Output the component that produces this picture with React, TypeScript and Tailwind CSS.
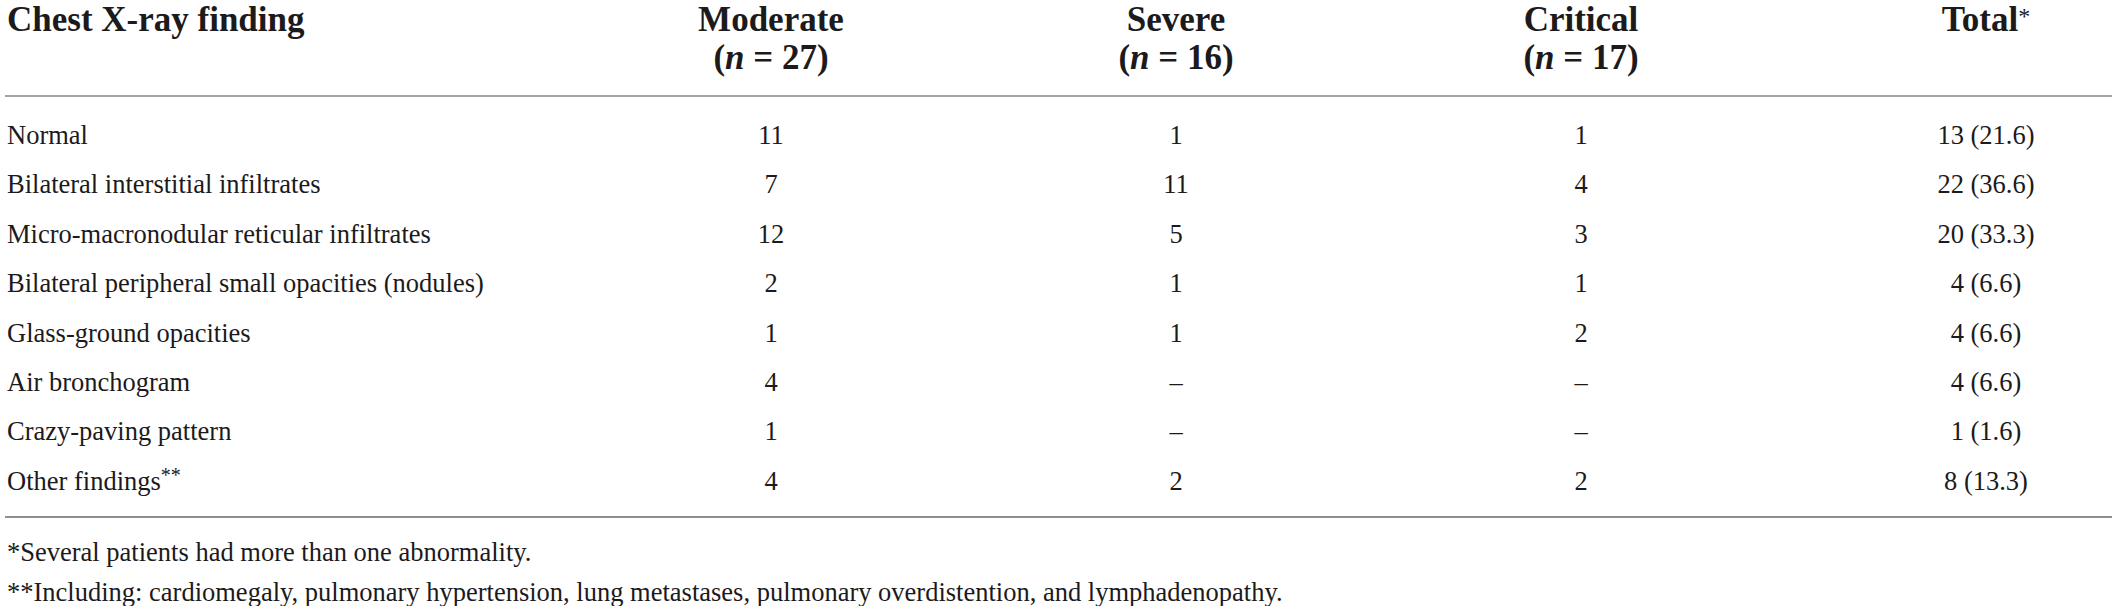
import React from 'react';

type Row = {
  label: string;
  sup?: string;
  moderate: string;
  severe: string;
  critical: string;
  total: string;
};

const ROWS: Row[] = [
  { label: 'Normal', moderate: '11', severe: '1', critical: '1', total: '13 (21.6)' },
  { label: 'Bilateral interstitial infiltrates', moderate: '7', severe: '11', critical: '4', total: '22 (36.6)' },
  { label: 'Micro-macronodular reticular infiltrates', moderate: '12', severe: '5', critical: '3', total: '20 (33.3)' },
  { label: 'Bilateral peripheral small opacities (nodules)', moderate: '2', severe: '1', critical: '1', total: '4 (6.6)' },
  { label: 'Glass-ground opacities', moderate: '1', severe: '1', critical: '2', total: '4 (6.6)' },
  { label: 'Air bronchogram', moderate: '4', severe: '–', critical: '–', total: '4 (6.6)' },
  { label: 'Crazy-paving pattern', moderate: '1', severe: '–', critical: '–', total: '1 (1.6)' },
  { label: 'Other findings', sup: '**', moderate: '4', severe: '2', critical: '2', total: '8 (13.3)' },
];

// first column + four centred count columns
const GRID = 'grid grid-cols-[461px_200px_200px_200px_200px] gap-x-[205px]';

const GroupHead = ({ name, n }: { name: string; n: number }) => (
  <div className="text-center whitespace-nowrap">
    <div>{name}</div>
    <div>
      (<span className="italic">n</span> = {n})
    </div>
  </div>
);

export default function App() {
  return (
    <div className="w-[2117px] h-[606px] overflow-hidden bg-white px-[5px] text-[#1c1a1b] font-['Liberation_Serif','Times_New_Roman',serif]">
      {/* header */}
      <div className={`${GRID} pt-[1px] pb-[18px] text-[35px] leading-[38px] font-bold`}>
        <div className="pl-[2px] whitespace-nowrap">Chest X-ray finding</div>
        <GroupHead name="Moderate" n={27} />
        <GroupHead name="Severe" n={16} />
        <GroupHead name="Critical" n={17} />
        <div className="text-center">
          Total<span className="align-top text-[24px] leading-[30px] font-normal">*</span>
        </div>
      </div>
      <div className="h-[2px] bg-[#a3a3a3]" />

      {/* body */}
      <div className="pt-[14px] pb-[10px] text-[26.5px] leading-[49.4px]">
        {ROWS.map((r) => (
          <div key={r.label} className={GRID}>
            <div className="pl-[2px] whitespace-nowrap">
              {r.label}
              {r.sup && <span className="align-top text-[20px] leading-[36px]">{r.sup}</span>}
            </div>
            <div className="text-center">{r.moderate}</div>
            <div className="text-center">{r.severe}</div>
            <div className="text-center">{r.critical}</div>
            <div className="text-center whitespace-nowrap">{r.total}</div>
          </div>
        ))}
      </div>
      <div className="h-[2px] bg-[#8f8f8f]" />

      {/* footnotes */}
      <div className="pt-[14px] pl-[2px] text-[26.5px] leading-[40px]">
        <p>*Several patients had more than one abnormality.</p>
        <p>
          **Including: cardiomegaly, pulmonary hypertension, lung metastases, pulmonary overdistention, and
          lymphadenopathy.
        </p>
      </div>
    </div>
  );
}
